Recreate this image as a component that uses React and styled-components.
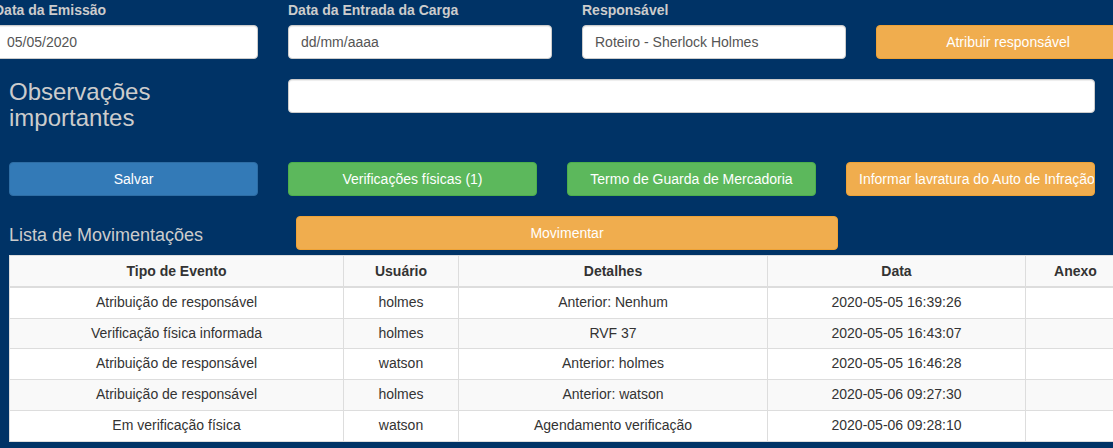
import React from "react";
import styled, { createGlobalStyle } from "styled-components";

const Global = createGlobalStyle`
  html, body { margin: 0; padding: 0; }
  body {
    background: #003366;
    font-family: "Liberation Sans", Arial, sans-serif;
    font-size: 14px;
    color: #333;
    overflow: hidden;
    width: 1113px;
    height: 448px;
  }
  * { box-sizing: border-box; }
`;

const Page = styled.div`
  padding-left: 9px;
  width: 1113px;
  height: 448px;
  overflow: hidden;
`;

const TopRow = styled.div`
  display: grid;
  grid-template-columns: repeat(4, 264px);
  column-gap: 30px;
  margin-left: -15px;
  width: 1146px;
`;

const Field = styled.div`
  display: flex;
  flex-direction: column;
  justify-content: flex-end;
`;

const Label = styled.label`
  font-weight: bold;
  color: #cccccc;
  line-height: 20px;
  margin-bottom: 5px;
  white-space: nowrap;
`;

const Input = styled.input`
  height: 34px;
  width: 100%;
  padding: 6px 12px;
  font-family: inherit;
  font-size: 14px;
  color: #555;
  background: #fff;
  border: 1px solid #ccc;
  border-radius: 4px;
  box-shadow: inset 0 1px 1px rgba(0, 0, 0, 0.075);
  outline: none;
`;

const palette = {
  primary: ["#337ab7", "#2e6da4"],
  success: ["#5cb85c", "#4cae4c"],
  warning: ["#f0ad4e", "#eea236"],
};

const Button = styled.button`
  display: flex;
  align-items: center;
  justify-content: ${(p) => (p.$overflow ? "flex-start" : "center")};
  height: 34px;
  width: 100%;
  padding: 6px 12px;
  font-family: inherit;
  font-size: 14px;
  line-height: 20px;
  color: #fff;
  background: ${(p) => palette[p.$variant][0]};
  border: 1px solid ${(p) => palette[p.$variant][1]};
  border-radius: 4px;
  white-space: nowrap;
  overflow: hidden;
`;

const ObsRow = styled.div`
  display: grid;
  grid-template-columns: 249px 807px;
  column-gap: 30px;
  margin-top: 20px;
  align-items: start;
`;

const ObsTitle = styled.h3`
  margin: 0;
  font-size: 24px;
  font-weight: normal;
  line-height: 26.4px;
  color: #cccccc;
`;

const ActionRow = styled.div`
  display: grid;
  grid-template-columns: repeat(4, 249px);
  column-gap: 30px;
  margin-top: 30px;
`;

const ListRow = styled.div`
  display: grid;
  grid-template-columns: 257px 542px;
  column-gap: 30px;
  margin-top: 20px;
  align-items: center;
`;

const ListTitle = styled.h4`
  margin: 0;
  padding-top: 4px;
  font-size: 18px;
  font-weight: normal;
  line-height: 20px;
  color: #cccccc;
  white-space: nowrap;
`;

const Table = styled.table`
  margin-top: 5px;
  width: 1116px;
  border-collapse: collapse;
  border: 1px solid #ddd;
  background: #fff;
  table-layout: fixed;
`;

const Th = styled.th`
  padding: 5px 8px 5px;
  line-height: 20px;
  font-weight: bold;
  text-align: center;
  border: 1px solid #ddd;
  border-bottom: 2px solid #ddd;
  background: #f9f9f9;
  white-space: nowrap;
`;

const Tr = styled.tr`
  background: ${(p) => (p.$striped ? "#f9f9f9" : "#fff")};
`;

const Td = styled.td`
  padding: 5px 8px;
  line-height: 19.8px;
  text-align: center;
  border: 1px solid #ddd;
  white-space: nowrap;
`;

const rows = [
  ["Atribuição de responsável", "holmes", "Anterior: Nenhum", "2020-05-05 16:39:26"],
  ["Verificação física informada", "holmes", "RVF 37", "2020-05-05 16:43:07"],
  ["Atribuição de responsável", "watson", "Anterior: holmes", "2020-05-05 16:46:28"],
  ["Atribuição de responsável", "holmes", "Anterior: watson", "2020-05-06 09:27:30"],
  ["Em verificação física", "watson", "Agendamento verificação", "2020-05-06 09:28:10"],
];

export default function App() {
  return (
    <>
      <Global />
      <Page>
        <TopRow>
          <Field>
            <Label>Data da Emissão</Label>
            <Input defaultValue="05/05/2020" />
          </Field>
          <Field>
            <Label>Data da Entrada da Carga</Label>
            <Input defaultValue="dd/mm/aaaa" />
          </Field>
          <Field>
            <Label>Responsável</Label>
            <Input defaultValue="Roteiro - Sherlock Holmes" />
          </Field>
          <Field>
            <Button $variant="warning">Atribuir responsável</Button>
          </Field>
        </TopRow>

        <ObsRow>
          <ObsTitle>
            Observações
            <br />
            importantes
          </ObsTitle>
          <Input />
        </ObsRow>

        <ActionRow>
          <Button $variant="primary">Salvar</Button>
          <Button $variant="success">Verificações físicas (1)</Button>
          <Button $variant="success">Termo de Guarda de Mercadoria</Button>
          <Button $variant="warning" $overflow>
            Informar lavratura do Auto de Infração
          </Button>
        </ActionRow>

        <ListRow>
          <ListTitle>Lista de Movimentações</ListTitle>
          <Button $variant="warning">Movimentar</Button>
        </ListRow>

        <Table>
          <colgroup>
            <col style={{ width: 334 }} />
            <col style={{ width: 115 }} />
            <col style={{ width: 309 }} />
            <col style={{ width: 258 }} />
            <col style={{ width: 100 }} />
          </colgroup>
          <thead>
            <tr>
              <Th>Tipo de Evento</Th>
              <Th>Usuário</Th>
              <Th>Detalhes</Th>
              <Th>Data</Th>
              <Th>Anexo</Th>
            </tr>
          </thead>
          <tbody>
            {rows.map((r, i) => (
              <Tr key={i} $striped={i % 2 === 1}>
                <Td>{r[0]}</Td>
                <Td>{r[1]}</Td>
                <Td>{r[2]}</Td>
                <Td>{r[3]}</Td>
                <Td></Td>
              </Tr>
            ))}
          </tbody>
        </Table>
      </Page>
    </>
  );
}
